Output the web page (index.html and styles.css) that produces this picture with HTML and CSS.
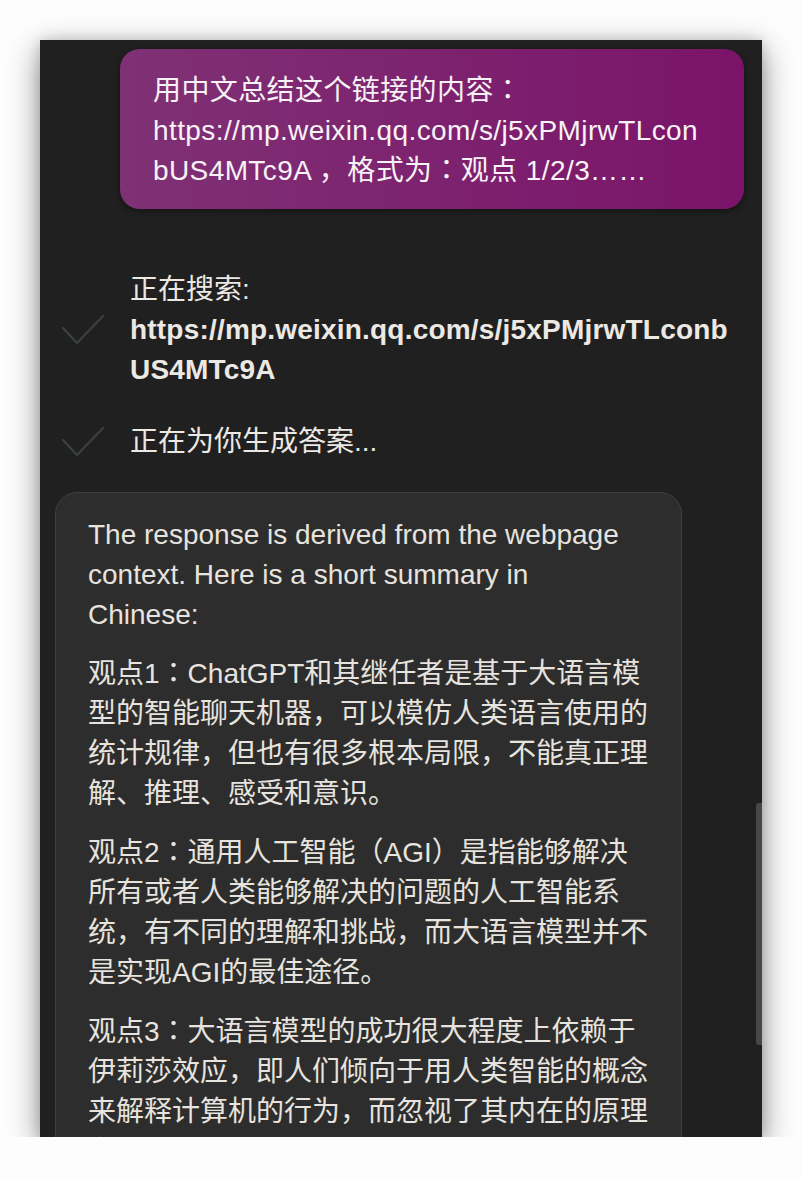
FILE: index.html
```html
<!DOCTYPE html>
<html lang="zh-CN">
<head>
<meta charset="utf-8">
<title>Chat</title>
<link rel="stylesheet" href="styles.css">
</head>
<body>
<div class="panel">
  <div class="bubble">
    <p>用中文总结这个链接的内容<span class="pc" lang="zh-TW">：</span>https://mp.weixin.qq.com/s/j5xPMjrwTLconbUS4MTc9A ，格式为<span class="pc" lang="zh-TW">：</span>观点 1/2/3……</p>
  </div>

  <div class="status-list">
    <div class="status">
      <svg class="check" viewBox="0 0 42 30" width="42" height="30"><path d="M1 13 L15 28 L41 1" /></svg>
      <div class="status-text">正在搜索:<br><strong class="url">https://mp.weixin.qq.com/s/j5xPMjrwTLconbUS4MTc9A</strong></div>
    </div>
    <div class="status">
      <svg class="check" viewBox="0 0 42 30" width="42" height="30"><path d="M1 13 L15 28 L41 1" /></svg>
      <div class="status-text">正在为你生成答案...</div>
    </div>
  </div>

  <div class="card">
    <p class="en">The response is derived from the webpage context. Here is a short summary in Chinese:</p>
    <p>观点1<span class="pc" lang="zh-TW">：</span>ChatGPT和其继任者是基于大语言模型的智能聊天机器，可以模仿人类语言使用的统计规律，但也有很多根本局限，不能真正理解、推理、感受和意识。</p>
    <p>观点2<span class="pc" lang="zh-TW">：</span>通用人工智能（AGI）是指能够解决所有或者人类能够解决的问题的人工智能系统，有不同的理解和挑战，而大语言模型并不是实现AGI的最佳途径。</p>
    <p>观点3<span class="pc" lang="zh-TW">：</span>大语言模型的成功很大程度上依赖于伊莉莎效应，即人们倾向于用人类智能的概念来解释计算机的行为，而忽视了其内在的原理和局限。</p>
  </div>

  <div class="scrollbar"></div>
</div>
</body>
</html>
```

FILE: styles.css
```css
* { box-sizing: border-box; }

html, body {
  margin: 0;
  padding: 0;
  background: #fdfdfd;
}

body {
  font-family: "Liberation Sans", "Noto Sans CJK SC", sans-serif;
  font-size: 28px;
  line-height: 40px;
}

p { margin: 0; }

.pc {
  font-family: "Noto Sans CJK TC", "Noto Sans CJK SC", sans-serif;
  line-height: 1;
}

.panel {
  position: relative;
  margin: 40px 0 0 40px;
  width: 722px;
  height: 1097px;
  background: #202020;
  overflow: hidden;
  padding-top: 9px;
  box-shadow: 0 10px 30px rgba(0, 0, 0, 0.45), 0 0 12px rgba(0, 0, 0, 0.15);
}

.bubble {
  margin: 0 18px 0 80px;
  padding: 22px 32px 18px 33px;
  border-radius: 20px;
  background: linear-gradient(to right, #7f3175, #7b1469);
  color: #f7f2f5;
  letter-spacing: 0.4px;
  overflow-wrap: anywhere;
  box-shadow: 0 2px 6px rgba(0, 0, 0, 0.45);
}

.status-list {
  margin-top: 61px;
  display: flex;
  flex-direction: column;
  gap: 32px;
}

.status {
  display: flex;
  align-items: center;
  padding-left: 22px;
  padding-right: 24px;
}

.check {
  flex: none;
  width: 42px;
  height: 30px;
  margin-right: 26px;
}

.check path {
  fill: none;
  stroke: #3a423c;
  stroke-width: 2.2;
  stroke-linecap: round;
  stroke-linejoin: miter;
}

.status-text {
  flex: 1;
  color: #ece8e4;
  overflow-wrap: anywhere;
}

.url {
  font-weight: 700;
  letter-spacing: 0.2px;
}

.card {
  margin: 30px 0 0 15px;
  width: 627px;
  padding: 22px 32px 20px;
  border: 1px solid #3c413c;
  border-radius: 22px;
  background: #2d2d2d;
  color: #e7e3df;
  display: flex;
  flex-direction: column;
  gap: 19px;
}

.card .en {
  max-width: 545px;
}

.scrollbar {
  position: absolute;
  right: 0;
  top: 763px;
  width: 6px;
  height: 242px;
  border-radius: 3px 0 0 3px;
  background: #444944;
}
```
